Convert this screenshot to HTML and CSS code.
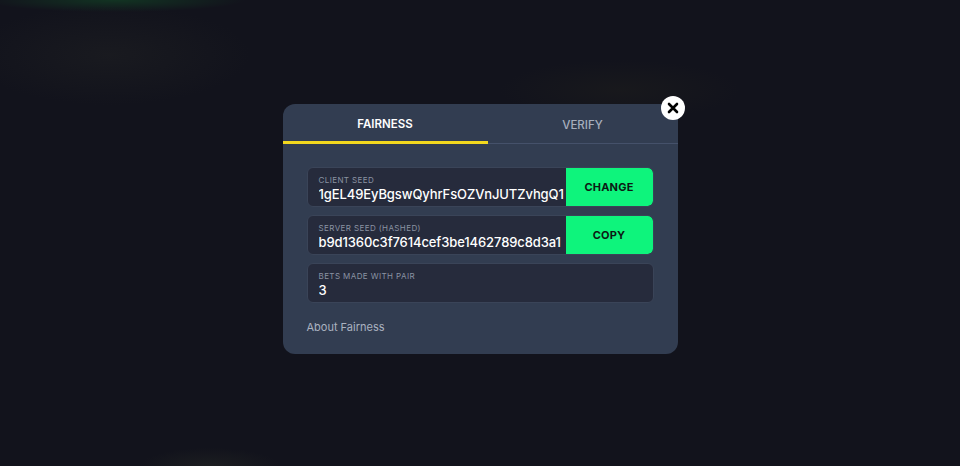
FILE: index.html
```html
<!DOCTYPE html>
<html lang="en">
<head>
    <meta charset="UTF-8">
    <meta name="viewport" content="width=device-width, initial-scale=1.0">
    <title>Fairness</title>
    <link rel="stylesheet" href="styles.css">
</head>
<body>
    <div class="overlay">
        <div class="modal">
            <button class="close" aria-label="Close">
                <svg width="12" height="12" viewBox="0 0 12 12">
                    <path d="M2 2 L10 10 M10 2 L2 10" stroke="#000" stroke-width="2.6" stroke-linecap="round"/>
                </svg>
            </button>

            <div class="tabs">
                <div class="tab active">FAIRNESS</div>
                <div class="tab">VERIFY</div>
            </div>

            <div class="modal-body">
                <div class="field">
                    <div class="field-info">
                        <div class="field-label">CLIENT SEED</div>
                        <div class="field-value">1gEL49EyBgswQyhrFsOZVnJUTZvhgQ1</div>
                    </div>
                    <button class="field-btn">CHANGE</button>
                </div>
                <div class="field">
                    <div class="field-info">
                        <div class="field-label">SERVER SEED (HASHED)</div>
                        <div class="field-value">b9d1360c3f7614cef3be1462789c8d3a1</div>
                    </div>
                    <button class="field-btn">COPY</button>
                </div>
                <div class="field">
                    <div class="field-info">
                        <div class="field-label">BETS MADE WITH PAIR</div>
                        <div class="field-value">3</div>
                    </div>
                </div>

                <a class="about" href="#">About Fairness</a>
            </div>
        </div>
    </div>
</body>
</html>
```

FILE: styles.css
```css
* {
    box-sizing: border-box;
}

body {
    margin: 0;
    height: 466px;
    overflow: hidden;
    font-family: Inter, "Noto Sans", sans-serif;
    /* the blurred page behind the modal */
    background:
        radial-gradient(ellipse 130px 12px at 115px 0px, rgba(18, 60, 36, 0.8), transparent),
        radial-gradient(ellipse 140px 50px at 110px 55px, rgba(28, 29, 33, 0.7), transparent),
        radial-gradient(ellipse 120px 30px at 620px 90px, rgba(28, 28, 28, 0.6), transparent),
        radial-gradient(ellipse 70px 18px at 210px 466px, rgba(32, 34, 34, 0.7), transparent),
        #12131c;
}

.overlay {
    display: flex;
    justify-content: center;
    padding-top: 104px;
}

.modal {
    position: relative;
    width: 395px;
    height: 250px;
    background-color: #323d51;
    border-radius: 12px;
}

.close {
    position: absolute;
    top: -8px;
    right: -7px;
    width: 24px;
    height: 24px;
    border-radius: 50%;
    border: none;
    background-color: #fff;
    display: flex;
    align-items: center;
    justify-content: center;
    padding: 0;
    cursor: pointer;
}

.tabs {
    display: flex;
    height: 40px;
    border-bottom: 1px solid #45516a;
}

.tab {
    flex: 1;
    display: flex;
    align-items: center;
    justify-content: center;
    font-size: 11.5px;
    font-weight: 500;
    color: #a6aebd;
    padding-top: 3px;
}

.tab.active {
    flex: 0 0 205px;
    color: #fff;
    font-weight: 600;
    border-bottom: 3px solid #f2d81e;
    margin-bottom: -1px;
}

.modal-body {
    padding: 23px 24px 0;
    display: flex;
    flex-direction: column;
    gap: 8px;
}

.field {
    display: flex;
    height: 40px;
    background-color: #262b3c;
    border: 1px solid #3a4458;
    border-radius: 6px;
    overflow: hidden;
}

.field-info {
    flex: 1;
    min-width: 0;
    padding: 7px 0 0 11px;
}

.field-label {
    font-size: 8px;
    color: #8a93a3;
    letter-spacing: 0.4px;
    line-height: 10px;
}

.field-value {
    font-size: 13px;
    font-weight: 500;
    letter-spacing: -0.1px;
    color: #fff;
    line-height: 18px;
    white-space: nowrap;
    overflow: hidden;
}

.field-btn {
    flex: 0 0 87px;
    border: none;
    border-radius: 0 5px 5px 0;
    background-color: #0ef47c;
    color: #0c1a14;
    font-family: inherit;
    font-size: 11px;
    font-weight: 700;
    letter-spacing: 0.2px;
    cursor: pointer;
}

.about {
    margin-top: 9px;
    font-size: 11px;
    color: #aab2c0;
    text-decoration: none;
}
```
